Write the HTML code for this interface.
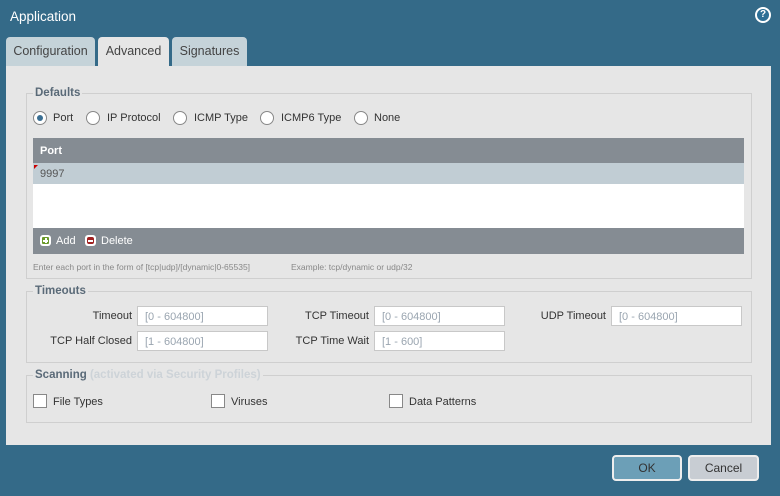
<!DOCTYPE html>
<html><head><style>
body{margin:0;width:780px;height:496px;background:#346a88;font-family:"Liberation Sans",sans-serif;position:relative;overflow:hidden;font-size:11px;color:#333}
.a{position:absolute}
.tab{position:absolute;top:37px;height:29px;border-radius:4px 4px 0 0;background:#c5d3d9;font-size:12.5px;color:#444;text-align:center;line-height:28px}
.fs{position:absolute;left:26px;width:724px;border:1px solid #cfcfcf}
.lg{position:absolute;top:-7px;left:6px;background:#e6e6e6;padding:0 2px;font-weight:bold;color:#5a6a78;font-size:11.5px}
.rad{position:absolute;top:111px;width:12px;height:12px;border:1px solid #888;border-radius:50%;background:#fff}
.rl{position:absolute;top:112px;font-size:11px;color:#333}
.inp{position:absolute;height:20px;width:131px;background:#fff;border:1px solid #c8c8c8;color:#9aa5b0;font-size:11px;line-height:20px;padding-left:7px;box-sizing:border-box}
.lb{position:absolute;font-size:11px;color:#333;text-align:right}
.cb{position:absolute;top:394px;width:12px;height:12px;border:1px solid #888;background:#fff}
.btn{position:absolute;top:455px;width:68px;height:26px;border:2px solid #eee;border-radius:4px;box-sizing:border-box;text-align:center;line-height:22px;font-size:12px;color:#333}
</style></head><body>
<div class="a" style="left:10px;top:9px;color:#fff;font-size:13.5px">Application</div>
<div class="a" style="left:755px;top:7px;width:12px;height:12px;border:2px solid #fff;border-radius:50%;background:#2c6f96;color:#fff;font-size:10px;font-weight:bold;text-align:center;line-height:12px">?</div>
<div class="tab" style="left:6px;width:89px">Configuration</div>
<div class="tab" style="left:98px;width:71px;background:#e6e6e6;height:30px">Advanced</div>
<div class="tab" style="left:172px;width:75px">Signatures</div>
<div class="a" style="left:6px;top:66px;width:765px;height:379px;background:#e6e6e6"></div>

<div class="fs" style="top:93px;height:184px"><div class="lg">Defaults</div></div>
<div class="rad" style="left:33px"><div style="margin:3px;width:6px;height:6px;border-radius:50%;background:#3a6f93"></div></div>
<div class="rl" style="left:53px">Port</div>
<div class="rad" style="left:86px"></div><div class="rl" style="left:107px">IP Protocol</div>
<div class="rad" style="left:173px"></div><div class="rl" style="left:194px">ICMP Type</div>
<div class="rad" style="left:260px"></div><div class="rl" style="left:281px">ICMP6 Type</div>
<div class="rad" style="left:354px"></div><div class="rl" style="left:374px">None</div>
<div class="a" style="left:33px;top:138px;width:711px;height:25px;background:#858c93;color:#fff;font-weight:bold;line-height:27px;text-indent:7px">Port</div>
<div class="a" style="left:33px;top:163px;width:711px;height:21px;background:#c1cdd4;color:#555;line-height:22px;text-indent:7px">9997</div>
<div class="a" style="left:34px;top:165px;width:0;height:0;border-top:4px solid #c00;border-right:4px solid transparent"></div>
<div class="a" style="left:33px;top:184px;width:711px;height:44px;background:#fff"></div>
<div class="a" style="left:33px;top:228px;width:711px;height:26px;background:#858c93"></div>
<div class="a" style="left:40px;top:235px;width:11px;height:11px;border-radius:3px;background:#fff"><div style="position:absolute;left:2px;top:2px;width:7px;height:7px;background:#6a9a2a;border-radius:1px"></div><div style="position:absolute;left:4.5px;top:3px;width:2px;height:5px;background:#fff"></div><div style="position:absolute;left:3px;top:4.5px;width:5px;height:2px;background:#fff"></div></div>
<div class="a" style="left:56px;top:235px;color:#fff;font-size:11px">Add</div>
<div class="a" style="left:85px;top:235px;width:11px;height:11px;border-radius:3px;background:#fff"><div style="position:absolute;left:2px;top:2px;width:7px;height:7px;background:#a02020;border-radius:2px"></div><div style="position:absolute;left:3px;top:4.5px;width:5px;height:2px;background:#fff"></div></div>
<div class="a" style="left:101px;top:235px;color:#fff;font-size:11px">Delete</div>
<div class="a" style="left:33px;top:262px;font-size:8.5px;color:#888">Enter each port in the form of [tcp|udp]/[dynamic|0-65535]</div>
<div class="a" style="left:291px;top:262px;font-size:8.5px;color:#888">Example: tcp/dynamic or udp/32</div>

<div class="fs" style="top:291px;height:70px"><div class="lg">Timeouts</div></div>
<div class="lb" style="left:40px;width:92px;top:310px">Timeout</div>
<div class="inp" style="left:137px;top:306px">[0 - 604800]</div>
<div class="lb" style="left:30px;width:102px;top:335px">TCP Half Closed</div>
<div class="inp" style="left:137px;top:331px">[1 - 604800]</div>
<div class="lb" style="left:270px;width:99px;top:310px">TCP Timeout</div>
<div class="inp" style="left:374px;top:306px">[0 - 604800]</div>
<div class="lb" style="left:270px;width:99px;top:335px">TCP Time Wait</div>
<div class="inp" style="left:374px;top:331px">[1 - 600]</div>
<div class="lb" style="left:510px;width:96px;top:310px">UDP Timeout</div>
<div class="inp" style="left:611px;top:306px">[0 - 604800]</div>

<div class="fs" style="top:375px;height:46px"><div class="lg">Scanning <span style="color:#cdd3d8">(activated via Security Profiles)</span></div></div>
<div class="cb" style="left:33px"></div><div class="a" style="left:53px;top:396px">File Types</div>
<div class="cb" style="left:211px"></div><div class="a" style="left:231px;top:396px">Viruses</div>
<div class="cb" style="left:389px"></div><div class="a" style="left:409px;top:396px">Data Patterns</div>

<div class="btn" style="left:612px;width:70px;background:#6c9fb7">OK</div>
<div class="btn" style="left:688px;width:71px;background:#c8cdd3">Cancel</div>
</body></html>
